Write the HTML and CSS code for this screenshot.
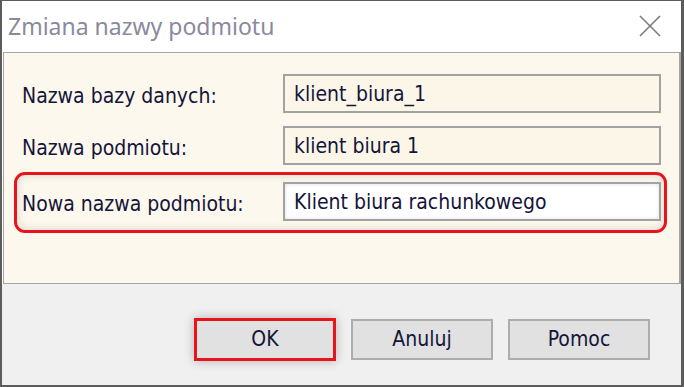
FILE: index.html
```html
<!DOCTYPE html>
<html lang="pl">
<head>
  <meta charset="UTF-8" />
  <title>Zmiana nazwy podmiotu</title>
  <link rel="stylesheet" href="styles.css">
</head>
<body>
  <div class="window">
    <div class="titlebar">
      <span class="title">Zmiana nazwy podmiotu</span>
      <svg class="close" width="22" height="22" viewBox="0 0 22 22">
        <path d="M1 1 L21 21 M21 1 L1 21" stroke="#7c7c7c" stroke-width="1.6" fill="none"/>
      </svg>
    </div>

    <div class="panel">
      <div class="row row-first">
        <label>Nazwa bazy danych:</label>
        <div class="field">klient_biura_1</div>
      </div>
      <div class="row row-second">
        <label>Nazwa podmiotu:</label>
        <div class="field">klient biura 1</div>
      </div>
      <div class="row highlight">
        <label>Nowa nazwa podmiotu:</label>
        <div class="field editable">Klient biura rachunkowego</div>
      </div>
    </div>

    <div class="footer">
      <button class="btn btn-ok">OK</button>
      <button class="btn">Anuluj</button>
      <button class="btn">Pomoc</button>
    </div>
  </div>
</body>
</html>
```

FILE: styles.css
```css
body {
  margin: 0;
  background: #ffffff;
}

.window {
  width: 684px;
  height: 387px;
  box-sizing: border-box;
  border-top: 1px solid #5c5c5c;
  border-left: 2px solid #5c5c5c;
  border-right: 3px solid #5c5c5c;
  border-bottom: 2px solid #5c5c5c;
  display: flex;
  flex-direction: column;
  font-family: "DejaVu Sans Condensed", "DejaVu Sans", sans-serif;
  font-size: 21px;
  color: #15153a;
}

.titlebar {
  height: 51px;
  background: #ffffff;
  display: flex;
  align-items: center;
  justify-content: space-between;
  padding: 0 20px 0 6px;
}

.title {
  font-family: "Noto Sans", sans-serif;
  font-size: 23px;
  color: #8a8a9c;
  margin-top: -2px;
}

.close {
  margin-top: -2px;
}

.panel {
  height: 232px;
  box-sizing: border-box;
  margin-left: 1px;
  background: #fcf8ed;
  border: 1px solid #a4a4a4;
  border-right-width: 2px;
  padding: 18px 0 0 10px;
}

.row {
  width: 653px;
  box-sizing: border-box;
  display: grid;
  grid-template-columns: 261px 378px;
  align-items: center;
  border: 3px solid transparent;
  padding: 0 3px 0 5px;
}

.row-first {
  margin-bottom: 7px;
}

.row-second {
  margin-bottom: 4px;
}

.row label {
  height: 39px;
  box-sizing: border-box;
  padding-top: 5px;
  line-height: 34px;
}

.highlight {
  border-color: #e8141c;
  border-radius: 11px;
  padding-top: 7px;
  padding-bottom: 9px;
  box-shadow: inset 0 0 7px 2px rgba(0, 0, 0, 0.1);
}

.field {
  height: 39px;
  box-sizing: border-box;
  border: 2px solid #a2a2a2;
  background: #fbf6e8;
  padding: 0 9px;
  line-height: 36px;
  white-space: nowrap;
}

.editable {
  background: #ffffff;
  box-shadow: inset 0 0 4px rgba(0, 0, 0, 0.12);
}

.footer {
  flex: 1;
  background: #f0f0f0;
  display: flex;
  justify-content: flex-end;
  align-items: center;
  gap: 15px;
  padding: 9px 31px 0 0;
}

.btn {
  width: 142px;
  height: 41px;
  font-family: inherit;
  font-size: 21px;
  color: #15153a;
  background: #e1e1e1;
  border: 2px solid #adadad;
  padding: 0;
}

.btn-ok {
  height: 43px;
  border: 3px solid #e8141c;
  box-shadow: 0 0 10px rgba(0, 0, 0, 0.25);
}
```
